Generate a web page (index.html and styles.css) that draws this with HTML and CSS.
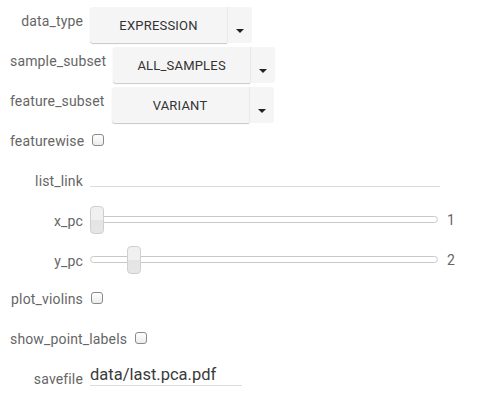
FILE: index.html
```html
<!DOCTYPE html>
<html>
<head>
<meta charset="utf-8">
<link rel="stylesheet" href="styles.css">
</head>
<body>
<div class="form">
  <div class="row">
    <div class="label">data_type</div>
    <div class="dropdown">
      <div class="dd-main">EXPRESSION</div>
      <div class="dd-caret"><span class="caret"></span></div>
    </div>
  </div>
  <div class="row">
    <div class="label">sample_subset</div>
    <div class="dropdown">
      <div class="dd-main">ALL_SAMPLES</div>
      <div class="dd-caret"><span class="caret"></span></div>
    </div>
  </div>
  <div class="row">
    <div class="label">feature_subset</div>
    <div class="dropdown">
      <div class="dd-main">VARIANT</div>
      <div class="dd-caret"><span class="caret"></span></div>
    </div>
  </div>
  <div class="row">
    <div class="label">featurewise</div>
    <div class="checkbox"></div>
  </div>
  <div class="row">
    <div class="label">list_link</div>
    <div class="text-input long"></div>
  </div>
  <div class="row">
    <div class="label">x_pc</div>
    <div class="slider">
      <div class="track"></div>
      <div class="handle" style="left:0px"></div>
    </div>
    <div class="value">1</div>
  </div>
  <div class="row short">
    <div class="label">y_pc</div>
    <div class="slider">
      <div class="track"></div>
      <div class="handle" style="left:37px"></div>
    </div>
    <div class="value">2</div>
  </div>
  <div class="row">
    <div class="label">plot_violins</div>
    <div class="checkbox"></div>
  </div>
  <div class="row">
    <div class="label">show_point_labels</div>
    <div class="checkbox"></div>
  </div>
  <div class="row">
    <div class="label">savefile</div>
    <div class="text-input file">data/last.pca.pdf</div>
  </div>
</div>
</body>
</html>
```

FILE: styles.css
```css
html, body {
  margin: 0;
  padding: 0;
  background: #ffffff;
}

.form {
  padding: 5px 0 0 10px;
  font-family: Roboto, "Liberation Sans", sans-serif;
  font-size: 14px;
  color: #666;
}

.row {
  display: flex;
  align-items: flex-start;
  height: 40px;
}

.row.short {
  height: 38px;
}

.label {
  min-width: 73px;
  padding-right: 7px;
  margin-top: 6px;
  line-height: 20px;
  text-align: right;
  white-space: nowrap;
  color: #666;
  letter-spacing: 0.15px;
}

.dropdown {
  display: flex;
  margin-top: 2px;
  height: 36px;
}

.dd-main {
  width: 137px;
  height: 36px;
  background: #f5f5f5;
  border-radius: 3px 0 0 3px;
  box-shadow: 0 1px 1px rgba(0, 0, 0, 0.22);
  display: flex;
  align-items: center;
  justify-content: center;
  font-size: 13px;
  color: #333;
  letter-spacing: 0.2px;
}

.dd-caret {
  width: 24px;
  height: 36px;
  background: #f5f5f5;
  border-left: 1px solid #e8e8e8;
  border-radius: 0 3px 3px 0;
  position: relative;
}

.caret {
  position: absolute;
  left: 8px;
  top: 22px;
  width: 0;
  height: 0;
  border-left: 4px solid transparent;
  border-right: 4px solid transparent;
  border-top: 4px solid #222;
}

.checkbox {
  margin-top: 9px;
  margin-left: 1px;
  width: 10px;
  height: 10px;
  border: 1px solid #8a8a8a;
  border-radius: 3px;
  background: linear-gradient(#ffffff, #ececec);
}

.text-input {
  margin-top: 2px;
  height: 19px;
  border-bottom: 1px solid #dcdcdc;
}

.text-input.long {
  width: 350px;
}

.text-input.file {
  width: 152px;
  height: 21px;
  margin-top: 1px;
  font-size: 16.5px;
  line-height: 21px;
  color: #3a3a3a;
  white-space: nowrap;
}

.slider {
  position: relative;
  width: 348px;
  height: 28px;
  margin-top: 1px;
}

.track {
  position: absolute;
  left: 0;
  right: 0;
  top: 10px;
  height: 5px;
  border: 1px solid #c8c8c8;
  border-radius: 4px;
  background: #fff;
}

.handle {
  position: absolute;
  top: 0;
  width: 12px;
  height: 26px;
  border: 1px solid #cfcfcf;
  border-radius: 4px;
  background: linear-gradient(#f0f0f0 0%, #f0f0f0 50%, #e4e4e4 50%, #e6e6e6 100%);
}

.value {
  margin-left: 9px;
  margin-top: 5px;
  line-height: 20px;
  font-size: 14px;
  color: #666;
}
```
